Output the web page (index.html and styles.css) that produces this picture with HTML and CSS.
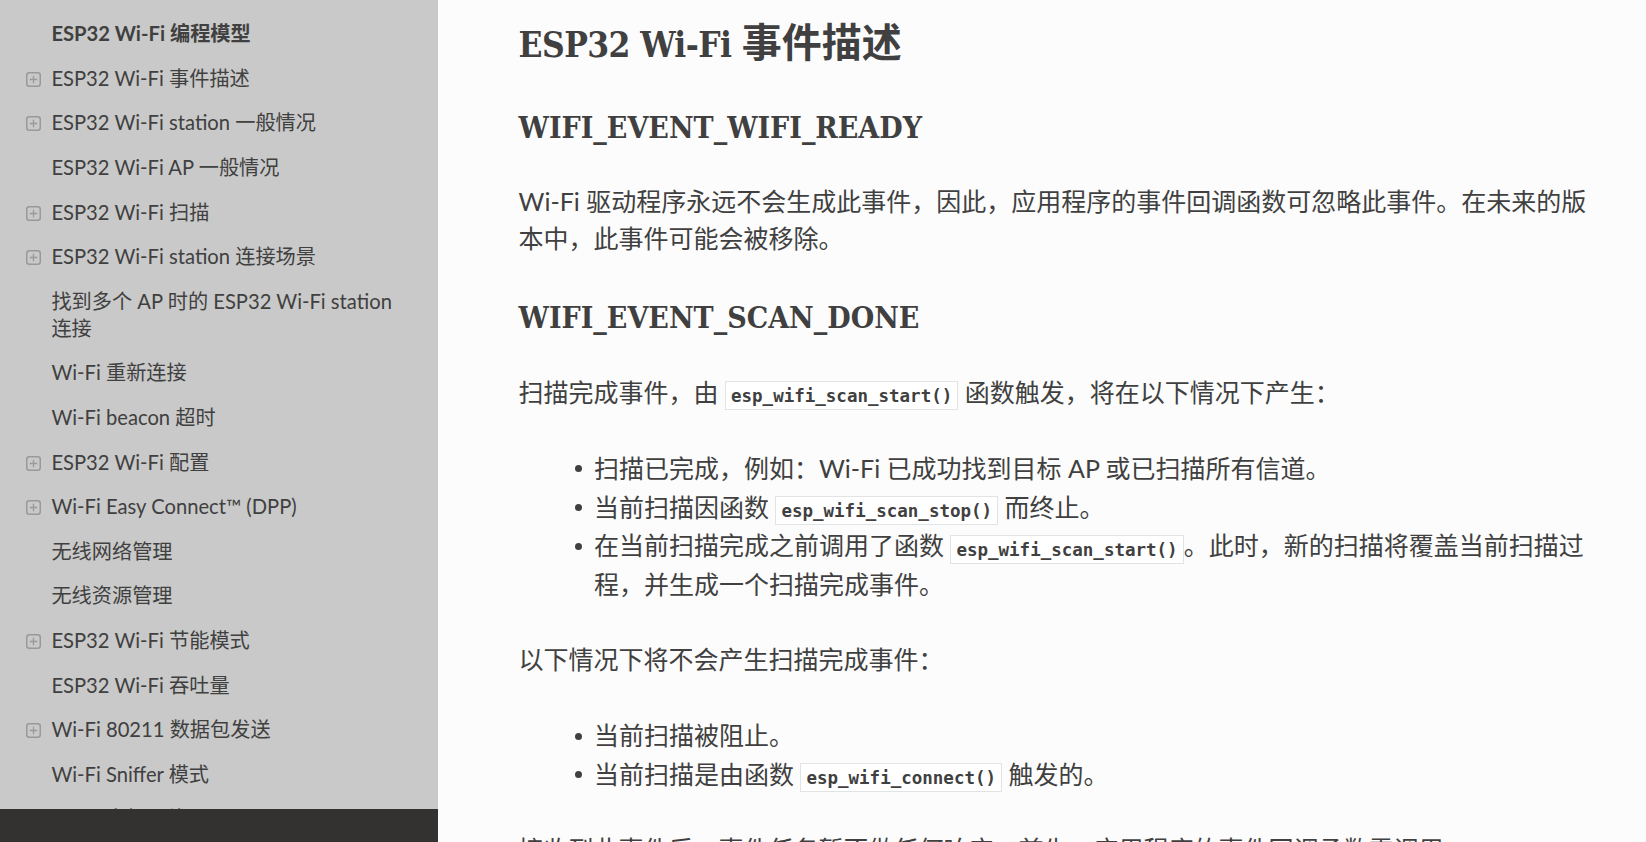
FILE: index.html
```html
<!DOCTYPE html>
<html lang="zh-CN">
<head>
<meta charset="utf-8">
<title>ESP32 Wi-Fi 事件描述</title>
<link rel="stylesheet" href="styles.css">
</head>
<body>
<div class="page">
  <nav class="sidebar">
    <ul class="toc">
      <li class="item current"><a class="link">ESP32 Wi-Fi 编程模型</a></li>
      <li class="item"><a class="link"><span class="toggle"><svg viewBox="0 0 15 15" width="15" height="15"><rect x="0.75" y="0.75" width="13.5" height="13.5" rx="2.5" fill="none" stroke="#999" stroke-width="1.5"/><path d="M7.5 3.8v7.4M3.8 7.5h7.4" stroke="#999" stroke-width="1.3"/></svg></span>ESP32 Wi-Fi 事件描述</a></li>
      <li class="item"><a class="link"><span class="toggle"><svg viewBox="0 0 15 15" width="15" height="15"><rect x="0.75" y="0.75" width="13.5" height="13.5" rx="2.5" fill="none" stroke="#999" stroke-width="1.5"/><path d="M7.5 3.8v7.4M3.8 7.5h7.4" stroke="#999" stroke-width="1.3"/></svg></span>ESP32 Wi-Fi station 一般情况</a></li>
      <li class="item"><a class="link">ESP32 Wi-Fi AP 一般情况</a></li>
      <li class="item"><a class="link"><span class="toggle"><svg viewBox="0 0 15 15" width="15" height="15"><rect x="0.75" y="0.75" width="13.5" height="13.5" rx="2.5" fill="none" stroke="#999" stroke-width="1.5"/><path d="M7.5 3.8v7.4M3.8 7.5h7.4" stroke="#999" stroke-width="1.3"/></svg></span>ESP32 Wi-Fi 扫描</a></li>
      <li class="item"><a class="link"><span class="toggle"><svg viewBox="0 0 15 15" width="15" height="15"><rect x="0.75" y="0.75" width="13.5" height="13.5" rx="2.5" fill="none" stroke="#999" stroke-width="1.5"/><path d="M7.5 3.8v7.4M3.8 7.5h7.4" stroke="#999" stroke-width="1.3"/></svg></span>ESP32 Wi-Fi station 连接场景</a></li>
      <li class="item"><a class="link">找到多个 AP 时的 ESP32 Wi-Fi station 连接</a></li>
      <li class="item"><a class="link">Wi-Fi 重新连接</a></li>
      <li class="item"><a class="link">Wi-Fi beacon 超时</a></li>
      <li class="item"><a class="link"><span class="toggle"><svg viewBox="0 0 15 15" width="15" height="15"><rect x="0.75" y="0.75" width="13.5" height="13.5" rx="2.5" fill="none" stroke="#999" stroke-width="1.5"/><path d="M7.5 3.8v7.4M3.8 7.5h7.4" stroke="#999" stroke-width="1.3"/></svg></span>ESP32 Wi-Fi 配置</a></li>
      <li class="item"><a class="link"><span class="toggle"><svg viewBox="0 0 15 15" width="15" height="15"><rect x="0.75" y="0.75" width="13.5" height="13.5" rx="2.5" fill="none" stroke="#999" stroke-width="1.5"/><path d="M7.5 3.8v7.4M3.8 7.5h7.4" stroke="#999" stroke-width="1.3"/></svg></span>Wi-Fi Easy Connect™ (DPP)</a></li>
      <li class="item"><a class="link">无线网络管理</a></li>
      <li class="item"><a class="link">无线资源管理</a></li>
      <li class="item"><a class="link"><span class="toggle"><svg viewBox="0 0 15 15" width="15" height="15"><rect x="0.75" y="0.75" width="13.5" height="13.5" rx="2.5" fill="none" stroke="#999" stroke-width="1.5"/><path d="M7.5 3.8v7.4M3.8 7.5h7.4" stroke="#999" stroke-width="1.3"/></svg></span>ESP32 Wi-Fi 节能模式</a></li>
      <li class="item"><a class="link">ESP32 Wi-Fi 吞吐量</a></li>
      <li class="item"><a class="link"><span class="toggle"><svg viewBox="0 0 15 15" width="15" height="15"><rect x="0.75" y="0.75" width="13.5" height="13.5" rx="2.5" fill="none" stroke="#999" stroke-width="1.5"/><path d="M7.5 3.8v7.4M3.8 7.5h7.4" stroke="#999" stroke-width="1.3"/></svg></span>Wi-Fi 80211 数据包发送</a></li>
      <li class="item"><a class="link">Wi-Fi Sniffer 模式</a></li>
      <li class="item"><a class="link"><span class="toggle"><svg viewBox="0 0 15 15" width="15" height="15"><rect x="0.75" y="0.75" width="13.5" height="13.5" rx="2.5" fill="none" stroke="#999" stroke-width="1.5"/><path d="M7.5 3.8v7.4M3.8 7.5h7.4" stroke="#999" stroke-width="1.3"/></svg></span>Wi-Fi 多根天线</a></li>
      <li class="item"><a class="link">Wi-Fi 信道状态信息</a></li>
    </ul>
    <div class="versions"></div>
  </nav>
  <main class="content">
    <h1 class="title">ESP32 Wi-Fi <span class="title-cjk">事件描述</span></h1>
    <h2 class="section">WIFI_EVENT_WIFI_READY</h2>
    <p class="para">Wi-Fi 驱动程序永远不会生成此事件，因此，应用程序的事件回调函数可忽略此事件。在未来的版本中，此事件可能会被移除。</p>
    <h2 class="section">WIFI_EVENT_SCAN_DONE</h2>
    <p class="para">扫描完成事件，由 <code class="code">esp_wifi_scan_start()</code> 函数触发，将在以下情况下产生：</p>
    <ul class="bullets">
      <li>扫描已完成，例如：Wi-Fi 已成功找到目标 AP 或已扫描所有信道。</li>
      <li>当前扫描因函数 <code class="code">esp_wifi_scan_stop()</code> 而终止。</li>
      <li>在当前扫描完成之前调用了函数 <code class="code">esp_wifi_scan_start()</code>。此时，新的扫描将覆盖当前扫描过程，并生成一个扫描完成事件。</li>
    </ul>
    <p class="para">以下情况下将不会产生扫描完成事件：</p>
    <ul class="bullets">
      <li>当前扫描被阻止。</li>
      <li>当前扫描是由函数 <code class="code">esp_wifi_connect()</code> 触发的。</li>
    </ul>
    <p class="para">接收到此事件后，事件任务暂不做任何响应。首先，应用程序的事件回调函数需调用 <code class="code">esp_wifi_scan_get_ap_num()</code> 和 <code class="code">esp_wifi_scan_get_ap_records()</code> 获取已扫描的 AP 列表。</p>
  </main>
</div>
</body>
</html>
```
FILE: styles.css
```css
html, body {
  margin: 0;
  padding: 0;
  height: 100%;
  overflow: hidden;
}
body {
  background: #fcfcfc;
  color: #404040;
  font-family: Lato, "Noto Sans CJK SC", sans-serif;
}
.page {
  display: flex;
  height: 100vh;
}
.sidebar {
  width: 438px;
  flex: 0 0 438px;
  background: #c9c9c9;
  overflow: hidden;
  position: relative;
}
.toc {
  list-style: none;
  margin: 0;
  padding: 11.5px 0 0 0;
}
.item {
  margin: 0;
}
.link {
  display: block;
  padding: 8.8px 35px 8.8px 51.4px;
  font-size: 20.2px;
  line-height: 27px;
  color: #404040;
}
.current .link {
  font-weight: bold;
}
.toggle {
  display: inline-block;
  width: 15px;
  height: 15px;
  margin-left: -25.4px;
  margin-right: 10.4px;
  vertical-align: -1px;
}
.toggle svg {
  display: block;
}
.versions {
  position: absolute;
  left: 0;
  bottom: 0;
  width: 100%;
  height: 33px;
  background: #343131;
}
.content {
  flex: 1;
  padding: 22.5px 50px 0 80.6px;
  min-width: 0;
}
.title {
  margin: 0 0 42.7px 0;
  font-family: "DejaVu Serif Condensed", "DejaVu Serif", "Noto Sans CJK SC", serif;
  font-stretch: semi-condensed;
  font-weight: bold;
  font-size: 35px;
  letter-spacing: -0.6px;
  line-height: 44.4px;
  color: #404040;
}
.title-cjk {
  font-size: 40px;
  letter-spacing: 0;
  line-height: 1;
}
.section {
  margin: 42.7px 0 37.8px 0;
  font-family: "DejaVu Serif Condensed", "DejaVu Serif", "Noto Sans CJK SC", serif;
  font-stretch: semi-condensed;
  font-weight: bold;
  font-size: 30px;
  line-height: 1.2;
  color: #404040;
}
.para {
  margin: 0 0 38px 0;
  font-size: 25px;
  line-height: 37px;
}
.bullets {
  margin: 0 0 37px 0;
  padding-left: 75.4px;
  list-style: none;
  font-size: 25px;
  line-height: 38.8px;
}
.bullets li::before {
  content: "";
  display: inline-block;
  width: 7px;
  height: 7px;
  border-radius: 50%;
  background: #404040;
  margin-left: -19.1px;
  margin-right: 12.1px;
  vertical-align: 5.5px;
}
.code {
  font-family: "DejaVu Sans Mono", "Liberation Mono", monospace;
  font-weight: bold;
  font-size: 17.5px;
  line-height: 1;
  background: #fff;
  border: 1px solid #e1e4e5;
  padding: 3.5px 5px;
  color: #404040;
}
```
